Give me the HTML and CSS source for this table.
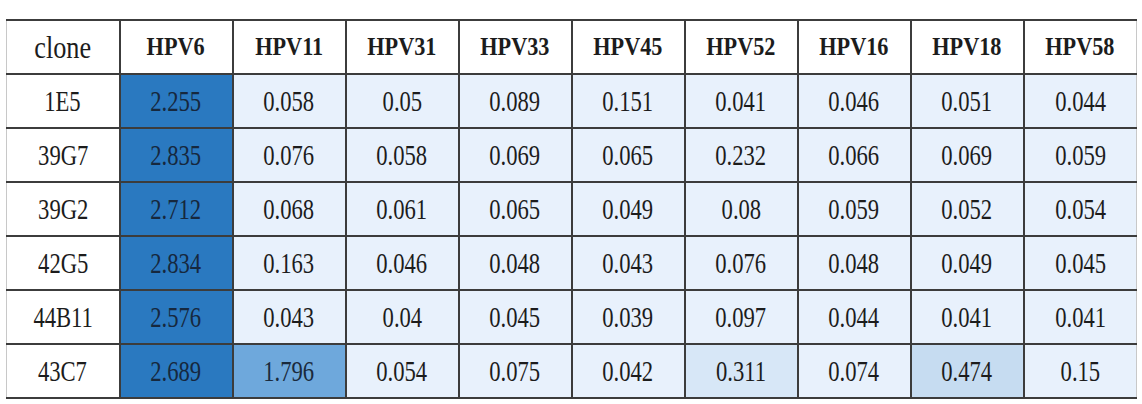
FILE: index.html
```html
<!DOCTYPE html>
<html>
<head>
<meta charset="utf-8">
<link rel="stylesheet" href="styles.css">
</head>
<body>
<table class="elisa">
  <thead>
    <tr>
      <th class="lbl"><span class="clone">clone</span></th>
      <th><span>HPV6</span></th>
      <th><span>HPV11</span></th>
      <th><span>HPV31</span></th>
      <th><span>HPV33</span></th>
      <th><span>HPV45</span></th>
      <th><span>HPV52</span></th>
      <th><span>HPV16</span></th>
      <th><span>HPV18</span></th>
      <th><span>HPV58</span></th>
    </tr>
  </thead>
  <tbody>
    <tr>
      <td class="lbl"><span>1E5</span></td>
      <td class="hi"><span>2.255</span></td>
      <td><span>0.058</span></td>
      <td><span>0.05</span></td>
      <td><span>0.089</span></td>
      <td><span>0.151</span></td>
      <td><span>0.041</span></td>
      <td><span>0.046</span></td>
      <td><span>0.051</span></td>
      <td><span>0.044</span></td>
    </tr>
    <tr>
      <td class="lbl"><span>39G7</span></td>
      <td class="hi"><span>2.835</span></td>
      <td><span>0.076</span></td>
      <td><span>0.058</span></td>
      <td><span>0.069</span></td>
      <td><span>0.065</span></td>
      <td><span>0.232</span></td>
      <td><span>0.066</span></td>
      <td><span>0.069</span></td>
      <td><span>0.059</span></td>
    </tr>
    <tr>
      <td class="lbl"><span>39G2</span></td>
      <td class="hi"><span>2.712</span></td>
      <td><span>0.068</span></td>
      <td><span>0.061</span></td>
      <td><span>0.065</span></td>
      <td><span>0.049</span></td>
      <td><span>0.08</span></td>
      <td><span>0.059</span></td>
      <td><span>0.052</span></td>
      <td><span>0.054</span></td>
    </tr>
    <tr>
      <td class="lbl"><span>42G5</span></td>
      <td class="hi"><span>2.834</span></td>
      <td><span>0.163</span></td>
      <td><span>0.046</span></td>
      <td><span>0.048</span></td>
      <td><span>0.043</span></td>
      <td><span>0.076</span></td>
      <td><span>0.048</span></td>
      <td><span>0.049</span></td>
      <td><span>0.045</span></td>
    </tr>
    <tr>
      <td class="lbl"><span>44B11</span></td>
      <td class="hi"><span>2.576</span></td>
      <td><span>0.043</span></td>
      <td><span>0.04</span></td>
      <td><span>0.045</span></td>
      <td><span>0.039</span></td>
      <td><span>0.097</span></td>
      <td><span>0.044</span></td>
      <td><span>0.041</span></td>
      <td><span>0.041</span></td>
    </tr>
    <tr>
      <td class="lbl"><span>43C7</span></td>
      <td class="hi"><span>2.689</span></td>
      <td class="mid"><span>1.796</span></td>
      <td><span>0.054</span></td>
      <td><span>0.075</span></td>
      <td><span>0.042</span></td>
      <td class="low2"><span>0.311</span></td>
      <td><span>0.074</span></td>
      <td class="low"><span>0.474</span></td>
      <td><span>0.15</span></td>
    </tr>
  </tbody>
</table>
</body>
</html>
```

FILE: styles.css
```css
/* ELISA cross reactivity table */
body {
  margin: 0;
  background: #fff;
  font-family: "Liberation Serif", "Times New Roman", serif;
  color: #1c1c1c;
}

.elisa {
  border-collapse: collapse;
  table-layout: fixed;
  width: 1131px;
  margin: 19px 0 0 6px;
  border-left: 1px solid #c8c8c8;
  border-right: 1px solid #c8c8c8;
}

.elisa th,
.elisa td {
  height: 52px;
  padding: 0;
  text-align: center;
  vertical-align: middle;
  border-top: 2px solid #3c3c3c;
  border-bottom: 2px solid #3c3c3c;
  border-left: 2px solid #3c3c3c;
  white-space: nowrap;
  overflow: hidden;
}

.elisa th:first-child,
.elisa td:first-child {
  border-left: 1px solid #c8c8c8;
}

.elisa span {
  display: inline-block;
  transform: scaleX(.78);
}

.elisa th {
  background: #fff;
  font-weight: bold;
  font-size: 25px;
}
.elisa th span {
  transform: scaleX(.89);
}
.elisa th span.clone {
  font-weight: normal;
  font-size: 32px;
  transform: scaleX(.82);
}

.elisa td {
  font-size: 29px;
  background: #e8f1fc;
}
.elisa td.lbl {
  background: #fff;
}
.elisa td.hi {
  background: #2a79c0;
  color: #16283e;
}
.elisa td.mid {
  background: #6ea8dc;
  color: #1a2a3c;
}
.elisa td.low {
  background: #c6dcf1;
}
.elisa td.low2 {
  background: #d7e7f7;
}
```
